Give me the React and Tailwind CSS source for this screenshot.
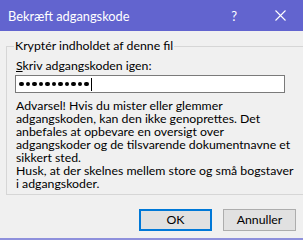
import React from 'react'

const dots = Array.from({ length: 11 })

const warning = [
  'Advarsel! Hvis du mister eller glemmer',
  'adgangskoden, kan den ikke genoprettes. Det',
  'anbefales at opbevare en oversigt over',
  'adgangskoder og de tilsvarende dokumentnavne et',
  'sikkert sted.',
  'Husk, at der skelnes mellem store og små bogstaver',
  'i adgangskoder.',
]

export default function App() {
  return (
    <div className="w-[303px] h-[240px] bg-[#f0f0f0] flex flex-col border-b-2 border-[#8e90dc] font-['Lato',sans-serif] text-[12.3px] text-black">
      {/* title bar */}
      <div className="h-[31px] bg-[#6264cf] flex items-center text-white shrink-0">
        <span className="ml-[8px] leading-[14px] text-[12.8px]">Bekræft adgangskode</span>
        <span className="ml-auto mr-[38px] text-[13px] leading-[14px]">?</span>
        <svg width="11" height="11" viewBox="0 0 11 11" className="mr-[17px]">
          <path d="M0.5 0.5 L10.5 10.5 M10.5 0.5 L0.5 10.5" stroke="white" strokeWidth="1.1" />
        </svg>
      </div>

      {/* group box */}
      <fieldset className="mt-[8px] ml-[6px] w-[291px] border border-[#d6d6d6] pl-[7px] pr-[10px] pb-[4px]">
        <legend className="px-[1px] leading-[14px]">Kryptér indholdet af denne fil</legend>
        <div className="mt-[6px] ml-[2px] leading-[14px]">
          <span className="underline">S</span>kriv adgangskoden igen:
        </div>
        <div className="mt-[2px] ml-[1px] w-[270px] h-[18px] bg-white border border-[#7a7a7a] flex items-center pl-[3px]">
          <div className="flex items-center gap-[2px]">
            {dots.map((_, i) => (
              <span key={i} className="w-[4.5px] h-[4.5px] rounded-full bg-black" />
            ))}
          </div>
          <span className="ml-[2px] w-[1px] h-[13px] bg-black" />
        </div>
        <div className="mt-[6px] ml-[2px] leading-[13px]">
          {warning.map((line) => (
            <div key={line} className="whitespace-nowrap">{line}</div>
          ))}
        </div>
      </fieldset>

      {/* buttons */}
      <div className="mt-[14px] flex justify-end gap-[11px] mr-[7px]">
        <button className="w-[73px] h-[22px] bg-[#e1e1e1] border-2 border-[#0078d7] leading-[14px]">
          OK
        </button>
        <button className="w-[73px] h-[22px] bg-[#e1e1e1] border border-[#adadad] leading-[14px]">
          Annuller
        </button>
      </div>
    </div>
  )
}
